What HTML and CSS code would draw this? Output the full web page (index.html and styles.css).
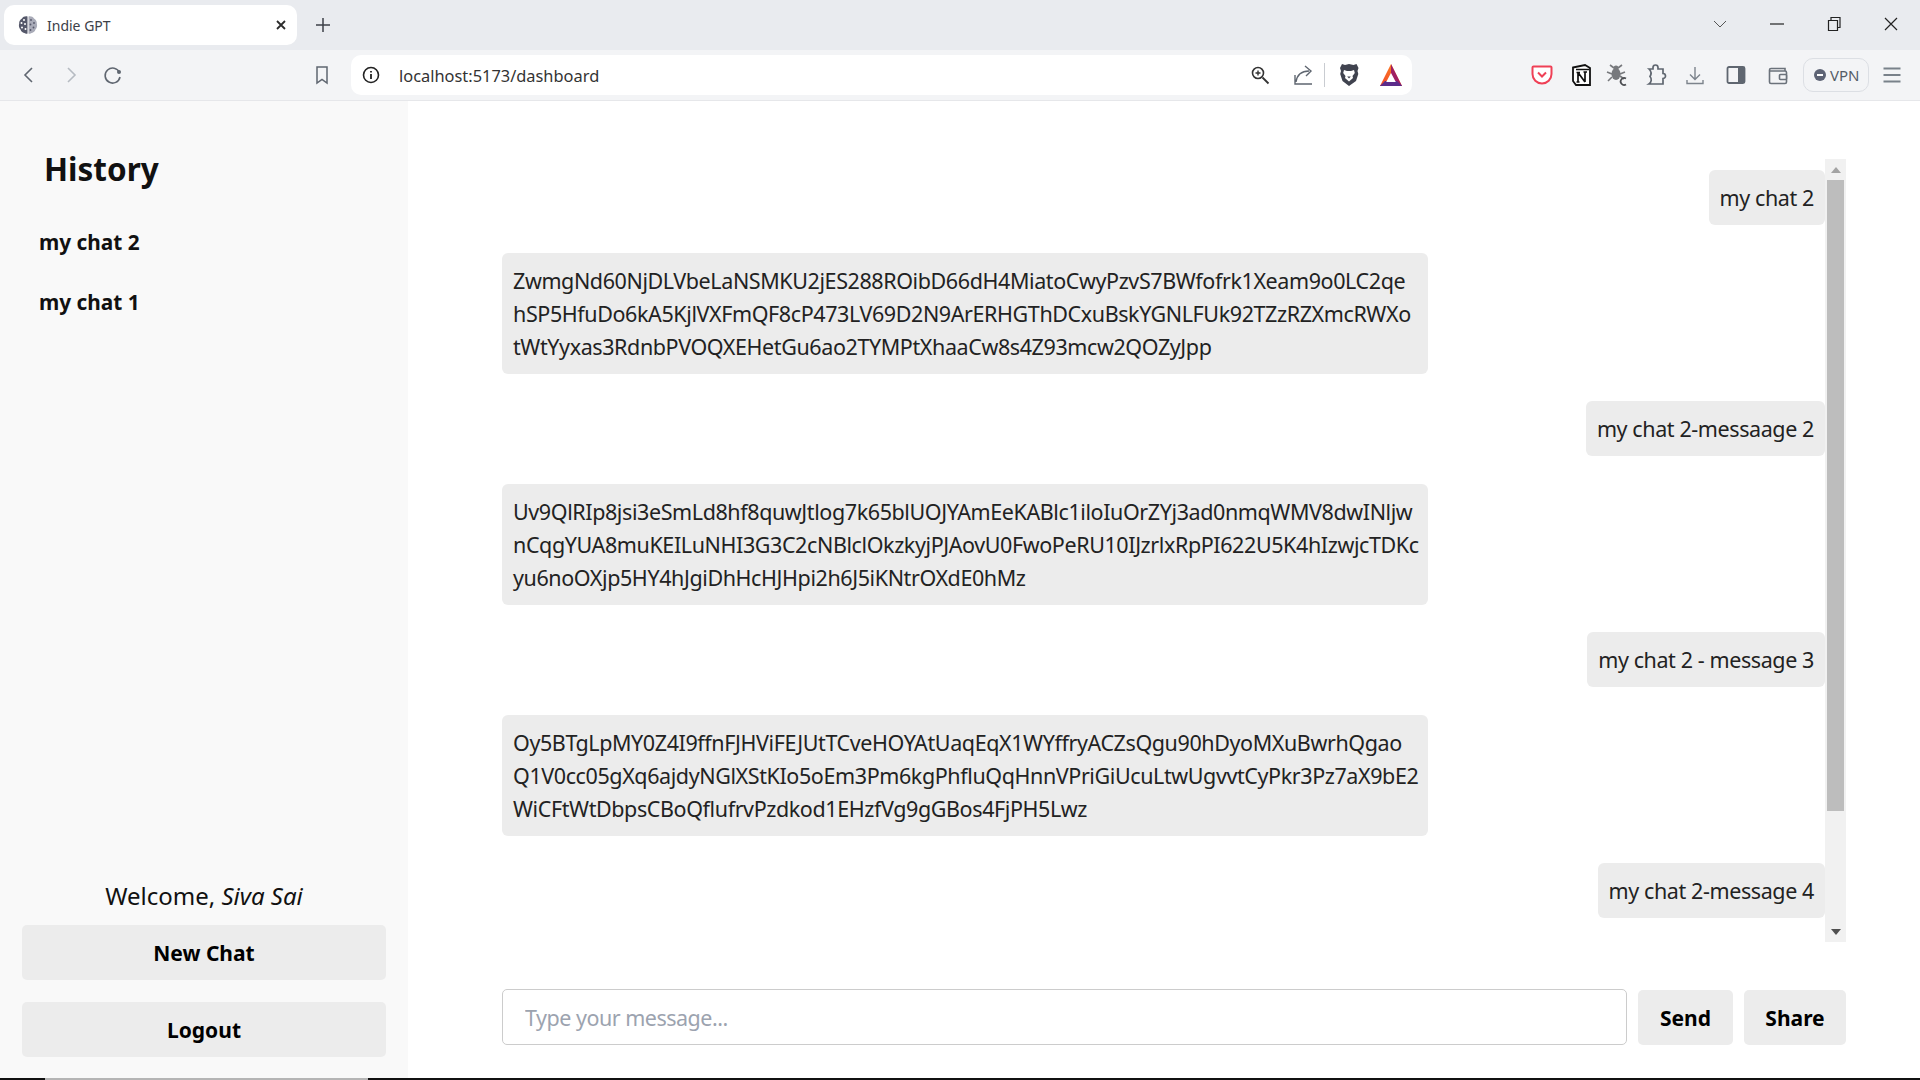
FILE: index.html
```html
<!DOCTYPE html>
<html lang="en">
<head>
  <meta charset="UTF-8">
  <title>Indie GPT</title>
  <link rel="stylesheet" href="styles.css">
</head>

<body>
  <div class="tab-strip">
    <div class="tab">
      <svg class="favicon" viewBox="0 0 20 20">
        <path d="M9.5 1.5C7 1 5 2 4 3.5 2 4.500 1 6.500 1.200 8.500.5 10.500 1 13 2.500 14.500 3 16.500 5 18 7 18.200 8 18.800 9 18.800 9.500 18.500Z" fill="#55586a"/>
        <path d="M10.500 1.500C13 1 15 2 16 3.500 18 4.500 19 6.500 18.800 8.500 19.500 10.500 19 13 17.500 14.500 17 16.500 15 18 13 18.200 12 18.800 11 18.800 10.500 18.500Z" fill="#a9abb8"/>
        <g fill="#fff">
          <circle cx="6" cy="5" r="1"/><circle cx="3.500" cy="8" r="1"/><circle cx="7" cy="9" r="1"/><circle cx="4" cy="12.500" r="1"/><circle cx="7.500" cy="14" r="1"/>
        </g>
        <g fill="#55586a">
          <circle cx="13" cy="5" r=".9"/><circle cx="16" cy="8" r=".9"/><circle cx="12.500" cy="9.500" r=".9"/><circle cx="15.500" cy="12.500" r=".9"/><circle cx="12.500" cy="15" r=".9"/>
        </g>
      </svg>
      <span class="tab-title">Indie GPT</span>
      <svg class="tab-close" viewBox="0 0 12 12"><path d="M2 2l8 8M10 2l-8 8" stroke="#2b2b2b" stroke-width="1.800" fill="none"/></svg>
    </div>
    <svg class="new-tab" viewBox="0 0 16 16"><path d="M8 1v14M1 8h14" stroke="#3c4048" stroke-width="1.500" fill="none"/></svg>
    <div class="window-controls">
      <svg class="win-btn" viewBox="0 0 16 16"><path d="M2 5l6 6 6-6" stroke="#555" fill="none"/></svg>
      <svg class="win-btn" viewBox="0 0 16 16"><path d="M1 8h14" stroke="#222" stroke-width="1.200" fill="none"/></svg>
      <svg class="win-btn" viewBox="0 0 16 16"><path d="M2.500 4.500h9v10h-9zM5 4.500V1.500h9v10h-2.500" stroke="#222" stroke-width="1.200" fill="none"/></svg>
      <svg class="win-btn" viewBox="0 0 16 16"><path d="M2 2l12 12M14 2L2 14" stroke="#222" stroke-width="1.200" fill="none"/></svg>
    </div>
  </div>

  <div class="toolbar">
    <svg class="tb-icon" viewBox="0 0 24 24"><path d="M15 5l-7 7 7 7" stroke="#5f6670" stroke-width="1.600" fill="none"/></svg>
    <svg class="tb-icon sp-18" viewBox="0 0 24 24"><path d="M9 5l7 7-7 7" stroke="#b6bbc2" stroke-width="1.600" fill="none"/></svg>
    <svg class="tb-icon sp-18" viewBox="0 0 24 24"><path d="M18.500 9.500A7.500 7.500 0 1 0 19 14" stroke="#5f6670" stroke-width="1.600" fill="none"/><circle cx="18" cy="9" r="2" fill="#5f6670"/></svg>
    <svg class="tb-icon sp-185" viewBox="0 0 24 24"><path d="M7 4h10v16l-5-3.500L7 20z" stroke="#5f6670" stroke-width="1.500" fill="none"/></svg>

    <div class="address-bar">
      <svg class="tb-icon" viewBox="0 0 24 24"><circle cx="12" cy="12" r="7.500" stroke="#222" stroke-width="1.600" fill="none"/><path d="M12 11v5M12 8v1.600" stroke="#222" stroke-width="1.800"/></svg>
      <span class="url">localhost:5173/dashboard</span>
      <svg class="tb-icon zoom-icon" viewBox="0 0 24 24"><circle cx="10" cy="10" r="5.500" stroke="#333" stroke-width="1.600" fill="none"/><path d="M14.500 14.500l6 6" stroke="#333" stroke-width="1.800"/><path d="M7.500 10h5M10 7.500v5" stroke="#333" stroke-width="1.400"/></svg>
      <svg class="tb-icon sp-20" viewBox="0 0 24 24"><path d="M3 12v9h17M4 19c1-7 5-11 13-11" stroke="#5f6670" stroke-width="1.400" fill="none"/><path d="M13 3l6 5-5 5" stroke="#5f6670" stroke-width="1.400" fill="none"/></svg>
      <span class="bar-divider"></span>
      <svg class="tb-icon sp-12" viewBox="0 0 24 24">
        <path d="M12 1l4.500 1 3-1 2 4-1 3 .8 3-2.300 7L12 23l-6.500-5L3.200 11 4 8 3 5l2-4 3 1z" fill="#40434f"/>
        <path d="M7 7l3 1h4l3-1 .8 3-2.300 3 .5 2-4 3.500L8 15l.5-2-2.300-3z" fill="#fff"/>
        <path d="M10.200 13.500h3.600L12 15.500z" fill="#40434f"/>
      </svg>
      <svg class="tb-icon sp-18" viewBox="0 0 24 24">
        <defs>
          <linearGradient id="bat-left" x1="0" y1="1" x2="1" y2="0"><stop offset="0" stop-color="#f1462c"/><stop offset="1" stop-color="#ff8a1e"/></linearGradient>
        </defs>
        <path d="M12 1L1 23h22z" fill="url(#bat-left)"/>
        <path d="M12 1l11 22H1l5-4h9.500L12 11z" fill="#9e1f63"/>
        <path d="M1 23l5-5h12l5 5z" fill="#5b2c8a"/>
        <path d="M12 10l-4.800 9h9.600z" fill="#fff"/>
      </svg>
    </div>

    <svg class="tb-icon sp-118" viewBox="0 0 24 24"><path d="M3.500 3.500h17a1 1 0 0 1 1 1V11a9.500 9.500 0 0 1-19 0V4.500a1 1 0 0 1 1-1z" stroke="#ef4056" stroke-width="2" fill="#fff"/><path d="M8 9.500l4 4 4-4" stroke="#ef4056" stroke-width="2" fill="none"/></svg>
    <svg class="tb-icon sp-15" viewBox="0 0 24 24"><path d="M4 4.500L16 2l5 3v17H7L4 18z" fill="#fff" stroke="#111" stroke-width="1.800"/><path d="M7 6.500h13" stroke="#111" stroke-width="1.500"/><path d="M9 19v-9.500M9 9.500l7 9.500M16 19V9M7.500 9.500H11M14.500 9H18M7.500 19h3" stroke="#111" stroke-width="1.700" fill="none"/></svg>
    <svg class="tb-icon sp-12" viewBox="0 0 24 24"><ellipse cx="11" cy="11" rx="4.500" ry="6" fill="#77797d"/><circle cx="11" cy="5" r="2.500" fill="#77797d"/><path d="M5 2l4 3M17 2l-4 3M2 9l5 2M20 9l-5 2M3 18l4-4M19 16l-4-3" stroke="#77797d" stroke-width="1.600"/><path d="M21 15.500a3.500 3.500 0 1 0 0 6" stroke="#4b4d51" stroke-width="1.800" fill="none"/></svg>
    <svg class="tb-icon sp-15" viewBox="0 0 24 24"><path d="M5 6h4V4.500a2.500 2.500 0 0 1 5 0V6h5v4.500a2.500 2.500 0 0 1 0 5V21H5a5 5 0 0 0 1-7.500A6 6 0 0 0 5 6z" stroke="#5f6670" stroke-width="1.700" fill="none"/></svg>
    <svg class="tb-icon sp-15" viewBox="0 0 24 24"><path d="M12 4v12M7 11.500l5 5 5-5M4 17v3.500h16V17" stroke="#7c838c" stroke-width="1.400" fill="none"/></svg>
    <svg class="tb-icon sp-17" viewBox="0 0 24 24"><rect x="3.500" y="4" width="17" height="16" rx="1.500" stroke="#5f6670" stroke-width="1.800" fill="none"/><rect x="14" y="4" width="6.500" height="16" fill="#5f6670"/></svg>
    <svg class="tb-icon sp-18" viewBox="0 0 24 24"><path d="M19 8V5.500H5A1.500 1.500 0 0 0 3.500 7v12A1.500 1.500 0 0 0 5 20.500h14A1.500 1.500 0 0 0 20.500 19V9.500A1.500 1.500 0 0 0 19 8H4" stroke="#6b727b" stroke-width="1.600" fill="none"/><rect x="13.500" y="11.500" width="7" height="5" rx="1" stroke="#6b727b" stroke-width="1.600" fill="#f3f4f6"/></svg>
    <div class="vpn"><span class="vpn-dot"></span>VPN</div>
    <svg class="tb-icon sp-11" viewBox="0 0 24 24"><path d="M3.500 5.500h17M3.500 12h17M3.500 18.500h17" stroke="#79818a" stroke-width="1.800" fill="none"/></svg>
  </div>

  <div class="app">
    <aside class="sidebar">
      <h1 class="history-title">History</h1>
      <div class="chat-link">my chat 2</div>
      <div class="chat-link">my chat 1</div>
      <div class="welcome">Welcome, <em>Siva Sai</em></div>
      <button class="side-btn">New Chat</button>
      <button class="side-btn">Logout</button>
    </aside>

    <main class="chat">
      <div class="thread">
        <div class="messages">
          <div class="msg msg-user">my chat 2</div>
          <div class="msg msg-bot">ZwmgNd60NjDLVbeLaNSMKU2jES288ROibD66dH4MiatoCwyPzvS7BWfofrk1Xeam9o0LC2qe<br>hSP5HfuDo6kA5KjlVXFmQF8cP473LV69D2N9ArERHGThDCxuBskYGNLFUk92TZzRZXmcRWXo<br>tWtYyxas3RdnbPVOQXEHetGu6ao2TYMPtXhaaCw8s4Z93mcw2QOZyJpp</div>
          <div class="msg msg-user">my chat 2-messaage 2</div>
          <div class="msg msg-bot">Uv9QlRIp8jsi3eSmLd8hf8quwJtlog7k65blUOJYAmEeKABlc1iloIuOrZYj3ad0nmqWMV8dwINljw<br>nCqgYUA8muKEILuNHI3G3C2cNBlclOkzkyjPJAovU0FwoPeRU10IJzrlxRpPI622U5K4hIzwjcTDKc<br>yu6noOXjp5HY4hJgiDhHcHJHpi2h6J5iKNtrOXdE0hMz</div>
          <div class="msg msg-user">my chat 2 - message 3</div>
          <div class="msg msg-bot">Oy5BTgLpMY0Z4I9ffnFJHViFEJUtTCveHOYAtUaqEqX1WYffryACZsQgu90hDyoMXuBwrhQgao<br>Q1V0cc05gXq6ajdyNGlXStKIo5oEm3Pm6kgPhfluQqHnnVPriGiUcuLtwUgvvtCyPkr3Pz7aX9bE2<br>WiCFtWtDbpsCBoQflufrvPzdkod1EHzfVg9gGBos4FjPH5Lwz</div>
          <div class="msg msg-user">my chat 2-message 4</div>
        </div>
        <div class="scrollbar">
          <span class="scroll-arrow arrow-up"></span>
          <span class="scroll-thumb"></span>
          <span class="scroll-arrow arrow-down"></span>
        </div>
      </div>
      <form class="composer">
        <input class="composer-input" type="text" placeholder="Type your message...">
        <button class="composer-btn send-btn" type="button">Send</button>
        <button class="composer-btn share-btn" type="button">Share</button>
      </form>
    </main>
  </div>

  <div class="taskbar"><span class="taskbar-lit"></span></div>
</body>
</html>
```

FILE: styles.css
```css
html, body {
  margin: 0;
  height: 100%;
}
*,
*::before,
*::after {
  box-sizing: border-box;
}
body {
  display: flex;
  flex-direction: column;
  height: 100vh;
  overflow: hidden;
  font-family: 'Noto Sans', 'Open Sans', sans-serif;
  color: #111;
  background: #fff;
}

/* browser chrome */
.tab-strip {
  display: flex;
  align-items: flex-start;
  height: 50px;
  padding: 5px 0 0 4px;
  background: #e9ebef;
}
.tab {
  display: flex;
  align-items: center;
  width: 293px;
  height: 40px;
  padding: 0 10px 0 14px;
  border-radius: 10px;
  background: #fff;
}
.favicon {
  width: 20px;
  height: 20px;
}
.tab-title {
  flex: 1;
  margin-left: 9px;
  font-size: 14px;
  color: #3c4048;
}
.tab-close {
  width: 12px;
  height: 12px;
}
.new-tab {
  width: 16px;
  height: 16px;
  margin: 12px 0 0 18px;
}
.window-controls {
  display: flex;
  gap: 41px;
  margin: 11px 21px 0 auto;
}
.win-btn {
  width: 16px;
  height: 16px;
}

.toolbar {
  display: flex;
  align-items: center;
  flex: none;
  height: 51px;
  padding-left: 17px;
  border-bottom: 1px solid #e6e7ea;
  background: #f3f4f6;
}
.tb-icon {
  flex: none;
  width: 24px;
  height: 24px;
}
.sp-11 { margin-left: 11px; }
.sp-12 { margin-left: 12px; }
.sp-15 { margin-left: 15px; }
.sp-17 { margin-left: 17px; }
.sp-18 { margin-left: 18px; }
.sp-20 { margin-left: 20px; }
.sp-118 { margin-left: 118px; }
.sp-185 { margin-left: 185px; }

.address-bar {
  display: flex;
  align-items: center;
  width: 1061px;
  height: 40px;
  margin-left: 17px;
  padding: 0 9px 0 8px;
  border-radius: 10px;
  background: #fff;
}
.url {
  margin-left: 16px;
  font-size: 16.400px;
  color: #333;
}
.zoom-icon {
  margin-left: auto;
}
.bar-divider {
  width: 1px;
  height: 24px;
  margin-left: 8px;
  background: #c9ccd1;
}
.vpn {
  display: flex;
  align-items: center;
  width: 66px;
  height: 34px;
  margin-left: 13px;
  padding-left: 10px;
  border: 1px solid #dcdfe4;
  border-radius: 10px;
  font-size: 15px;
  color: #555c66;
}
.vpn-dot {
  position: relative;
  width: 12px;
  height: 12px;
  margin-right: 4px;
  border-radius: 50%;
  background: #5e6475;
}
.vpn-dot::after {
  content: '';
  position: absolute;
  left: 3px;
  top: 5px;
  width: 6px;
  height: 2px;
  background: #fff;
}

/* app */
.app {
  display: flex;
  flex: 1;
  min-height: 0;
}
.sidebar {
  display: flex;
  flex-direction: column;
  width: 408px;
  padding: 0 22px;
  background: #f9f9f9;
}
.history-title {
  margin: 44px 0 0 22px;
  font-size: 31.500px;
  line-height: 48px;
  font-weight: 700;
}
.chat-link {
  margin: 37px 0 0 17px;
  font-size: 20.800px;
  line-height: 24px;
  font-weight: 700;
}
.chat-link + .chat-link {
  margin-top: 36px;
}
.welcome {
  margin-top: auto;
  margin-bottom: 11px;
  text-align: center;
  font-size: 24px;
  line-height: 36px;
}
.side-btn {
  flex: none;
  height: 55px;
  margin-bottom: 22px;
  border: 0;
  border-radius: 5px;
  font-family: inherit;
  font-size: 21px;
  font-weight: 700;
  color: #000;
  background: #ececec;
}
.side-btn:last-child {
  margin-bottom: 21px;
}

.chat {
  display: flex;
  flex-direction: column;
  flex: 1;
  min-width: 0;
  padding: 58px 74px 33px 94px;
  background: #fff;
}
.thread {
  display: flex;
  flex: 1;
  min-height: 0;
}
.messages {
  display: flex;
  flex-direction: column;
  flex: 1;
  min-width: 0;
  gap: 27.500px;
  padding-top: 11px;
  overflow: hidden;
  font-size: 21.500px;
  letter-spacing: -.4px;
  line-height: 33px;
  color: #222;
}
.msg {
  flex: none;
  padding: 11px;
  border-radius: 6px;
  white-space: nowrap;
  background: #ececec;
}
.msg-user {
  align-self: flex-end;
}
.msg-bot {
  align-self: flex-start;
  width: 926px;
}

/* the scrollbar is drawn, the message list does not really scroll */
.scrollbar {
  display: flex;
  flex-direction: column;
  flex: none;
  width: 21px;
  background: #f1f1f1;
}
.scroll-arrow {
  display: flex;
  align-items: center;
  justify-content: center;
  flex: none;
  height: 21px;
}
.scroll-arrow::before {
  content: '';
  border-left: 5px solid transparent;
  border-right: 5px solid transparent;
}
.arrow-up::before {
  border-bottom: 6px solid #a3a3a3;
}
.arrow-down {
  margin-top: auto;
}
.arrow-down::before {
  border-top: 6px solid #505050;
}
.scroll-thumb {
  flex: none;
  height: 631px;
  margin: 0 2px;
  background: #bdbdbd;
}

.composer {
  display: flex;
  flex: none;
  gap: 11px;
  height: 56px;
  margin-top: 47px;
}
.composer-input {
  flex: 1;
  min-width: 0;
  padding: 0 22px;
  border: 1px solid #ccc;
  border-radius: 5px;
  outline: none;
  font-family: inherit;
  font-size: 21.500px;
  letter-spacing: -.5px;
  color: #222;
  background: #fff;
}
.composer-input::placeholder {
  color: #9ca3af;
}
.composer-btn {
  flex: none;
  height: 55px;
  margin-top: 1px;
  border: 0;
  border-radius: 5px;
  font-family: inherit;
  font-size: 21px;
  font-weight: 700;
  color: #000;
  background: #ececec;
}
.send-btn {
  width: 95px;
}
.share-btn {
  width: 102px;
}

.taskbar {
  flex: none;
  height: 2px;
  padding-left: 45px;
  background: #111;
}
.taskbar-lit {
  display: block;
  width: 323px;
  height: 2px;
  background: #b5b5b5;
}
```
